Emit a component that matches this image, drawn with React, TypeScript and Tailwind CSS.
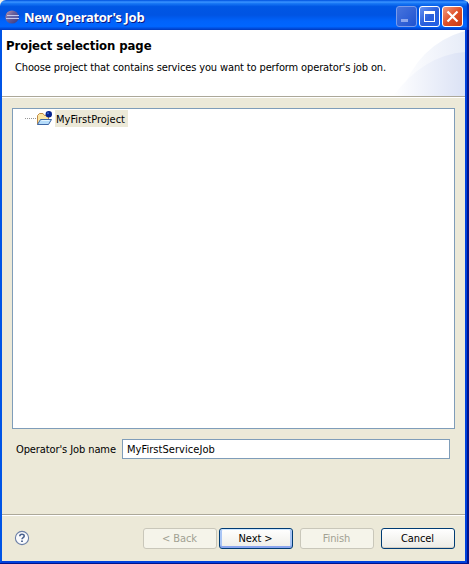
import React from "react";

function EclipseIcon() {
  return (
    <svg width="14" height="14" viewBox="0 0 14 14" className="shrink-0">
      <defs>
        <linearGradient id="globe" x1="0" y1="0" x2="1" y2="1">
          <stop offset="0" stopColor="#d19a9f" />
          <stop offset="0.4" stopColor="#6b629d" />
          <stop offset="1" stopColor="#39377f" />
        </linearGradient>
      </defs>
      <circle cx="7" cy="7" r="6.6" fill="url(#globe)" />
      <path d="M2 5.5h12M1 8.5h13" stroke="#c3c9ec" strokeWidth="1" />
      <path d="M2 7h11" stroke="#6a6fb5" strokeWidth="1" />
    </svg>
  );
}

function FolderIcon() {
  return (
    <svg width="16" height="16" viewBox="0 0 16 16" className="shrink-0">
      <path d="M1.5 13.5V4.5L3.5 2.5H7L8.5 4.5H12.5V8" fill="#fbe6a5" stroke="#c08a46" />
      <path d="M4.5 8.5H15.5L12.5 13.5H1.5Z" fill="#b5dcfa" stroke="#3d67a5" />
      <path d="M5.5 9.5H13.5" stroke="#e4f5ff" />
      <circle cx="12.8" cy="3.2" r="3.2" fill="#06238e" />
      <circle cx="12" cy="2.3" r="1" fill="#3567cc" />
    </svg>
  );
}

function HelpIcon() {
  return (
    <svg width="16" height="16" viewBox="0 0 16 16">
      <circle cx="8" cy="8" r="6.6" fill="#fafbfd" stroke="#6b7fa6" strokeWidth="1.1" />
      <path d="M5.8 6.3C5.8 3.5 10.2 3.7 10.2 6C10.2 7.6 8 7.6 8 9.3" fill="none" stroke="#4a628e" strokeWidth="1.6" />
      <path d="M7.1 10.4h1.8v1.7H7.1z" fill="#4a628e" />
    </svg>
  );
}

function CaptionButton({ kind }: { kind: "min" | "max" | "close" }) {
  const look = {
    min: "border-[#7a9bea] bg-linear-to-br from-[#4774dd] to-[#1f52d0]",
    max: "border-white bg-linear-to-br from-[#6692f2] via-[#2b60dc] to-[#1f5ee6]",
    close: "border-white bg-linear-to-br from-[#f09a7e] via-[#df4f27] to-[#c93a12]",
  }[kind];
  return (
    <button className={`h-[21px] w-[21px] rounded-[3px] border ${look}`}>
      <svg width="19" height="19" viewBox="0 0 19 19">
        {kind === "min" && <path d="M4 12h7v3H4z" fill="#8ba6ec" />}
        {kind === "max" && <path d="M4 4h11v11H4zM5 7v7h9V7z" fill="#fff" fillRule="evenodd" />}
        {kind === "close" && <path d="M4.5 4.5l10 10M14.5 4.5l-10 10" stroke="#fff" strokeWidth="2.2" />}
      </svg>
    </button>
  );
}

function DialogButton({ label, variant }: { label: string; variant: "disabled" | "primary" | "normal" }) {
  const look = {
    disabled: "border-[#c9c7ba] bg-[#f5f4ea] text-[#a1a192]",
    primary:
      "border-[#003c74] bg-linear-to-b from-white to-[#eeede7] text-black shadow-[inset_0_1px_0_#cee7ff,inset_0_-2px_0_#8aa5ee,inset_2px_0_0_#a9c5f5,inset_-2px_0_0_#a9c5f5]",
    normal: "border-[#003c74] bg-linear-to-b from-white to-[#ecebe5] text-black shadow-[inset_0_-1px_0_#d6d0c5]",
  }[variant];
  return (
    <button className={`flex h-[21px] w-[74px] items-center justify-center rounded-[3px] border pt-px pr-px ${look}`}>
      {label}
    </button>
  );
}

export default function App() {
  return (
    <div className="h-[564px] w-[469px] bg-[#f4f2e8] font-['DejaVu_Sans_Condensed','DejaVu_Sans',sans-serif] text-[11px] leading-[14px] tracking-[-0.1px] text-black [font-stretch:condensed]">
      <div className="flex h-full flex-col overflow-hidden rounded-t-[6px]">
        <header className="flex h-[30px] shrink-0 items-center bg-[linear-gradient(180deg,#0058e6_0%,#3a93ff_7%,#1676f4_12%,#0057e4_22%,#0054e3_50%,#0063fb_70%,#0066ff_88%,#0048d6_96%,#003dbe_100%)] pt-[3px] pr-[6px] pl-[5px] shadow-[inset_-2px_0_1px_#0030b8]">
          <EclipseIcon />
          <h1 className="ml-[5px] flex-1 whitespace-nowrap font-['Noto_Sans',sans-serif] text-[13px] font-bold tracking-[-0.31px] text-white [text-shadow:1px_1px_#0a1883]">
            New Operator's Job
          </h1>
          <div className="flex gap-[2px]">
            <CaptionButton kind="min" />
            <CaptionButton kind="max" />
            <CaptionButton kind="close" />
          </div>
        </header>

        <div className="flex min-h-0 flex-1 border-r-2 border-b border-[#00138c]">
          <div className="flex min-w-0 flex-1 flex-col border-r-2 border-b-2 border-l-2 border-r-[#0041dc] border-b-[#0041dc] border-l-[#0054e6] bg-[#ece9d8]">
            <section className="relative h-[68px] shrink-0 overflow-hidden border-b border-white bg-white">
              <svg className="absolute top-0 right-0" width="75" height="66" viewBox="0 0 75 66">
                <defs>
                  <linearGradient id="outer">
                    <stop offset="0" stopColor="#fff" />
                    <stop offset="1" stopColor="#e7ecf8" />
                  </linearGradient>
                  <linearGradient id="inner">
                    <stop offset="0" stopColor="#fff" />
                    <stop offset="1" stopColor="#dbe2f5" />
                  </linearGradient>
                </defs>
                <path d="M10 66Q28 14 75 1V66Z" fill="url(#outer)" />
                <path d="M3 66Q34 25 75 22V66Z" fill="url(#inner)" />
              </svg>
              <div className="relative flex h-[67px] flex-col border-b border-[#aca899] pt-[8px] pl-1">
                <h2 className="whitespace-nowrap text-[13px] leading-[15px] font-bold tracking-[-0.08px]">
                  Project selection page
                </h2>
                <p className="mt-[8px] ml-[9px] whitespace-nowrap tracking-[-0.13px]">
                  Choose project that contains services you want to perform operator's job on.
                </p>
              </div>
            </section>

            <main className="flex min-h-0 flex-1 flex-col px-[10px] pt-[10px]">
              <div className="h-[321px] border border-[#7f9db9] bg-white">
                <div className="flex items-center pt-px pl-[12px]">
                  <span className="w-[11px] border-b border-dotted border-[#969696]" />
                  <FolderIcon />
                  <span className="ml-[3px] flex h-[17px] w-[73px] items-center bg-[#ece9d8] pt-[2px] pl-px tracking-[0px] whitespace-nowrap">
                    MyFirstProject
                  </span>
                </div>
              </div>
              <label className="mt-[10px] flex items-center pl-[4px]">
                <span className="w-[106px] pt-[2px] whitespace-nowrap">Operator's Job name</span>
                <input
                  defaultValue="MyFirstServiceJob"
                  className="h-[20px] w-[328px] border border-[#7f9db9] bg-white px-[4px] tracking-[0.05px] outline-none"
                />
              </label>
            </main>

            <footer className="flex h-[47px] shrink-0 items-start border-t border-[#aca899] pt-[13px] pr-[10px] pl-[12px] shadow-[inset_0_1px_0_#fff]">
              <button className="mt-[2px] h-4 w-4">
                <HelpIcon />
              </button>
              <div className="ml-auto flex">
                <DialogButton label="< Back" variant="disabled" />
                <span className="w-[2px]" />
                <DialogButton label="Next >" variant="primary" />
                <span className="w-[7px]" />
                <DialogButton label="Finish" variant="disabled" />
                <span className="w-[7px]" />
                <DialogButton label="Cancel" variant="normal" />
              </div>
            </footer>
          </div>
        </div>
      </div>
    </div>
  );
}
